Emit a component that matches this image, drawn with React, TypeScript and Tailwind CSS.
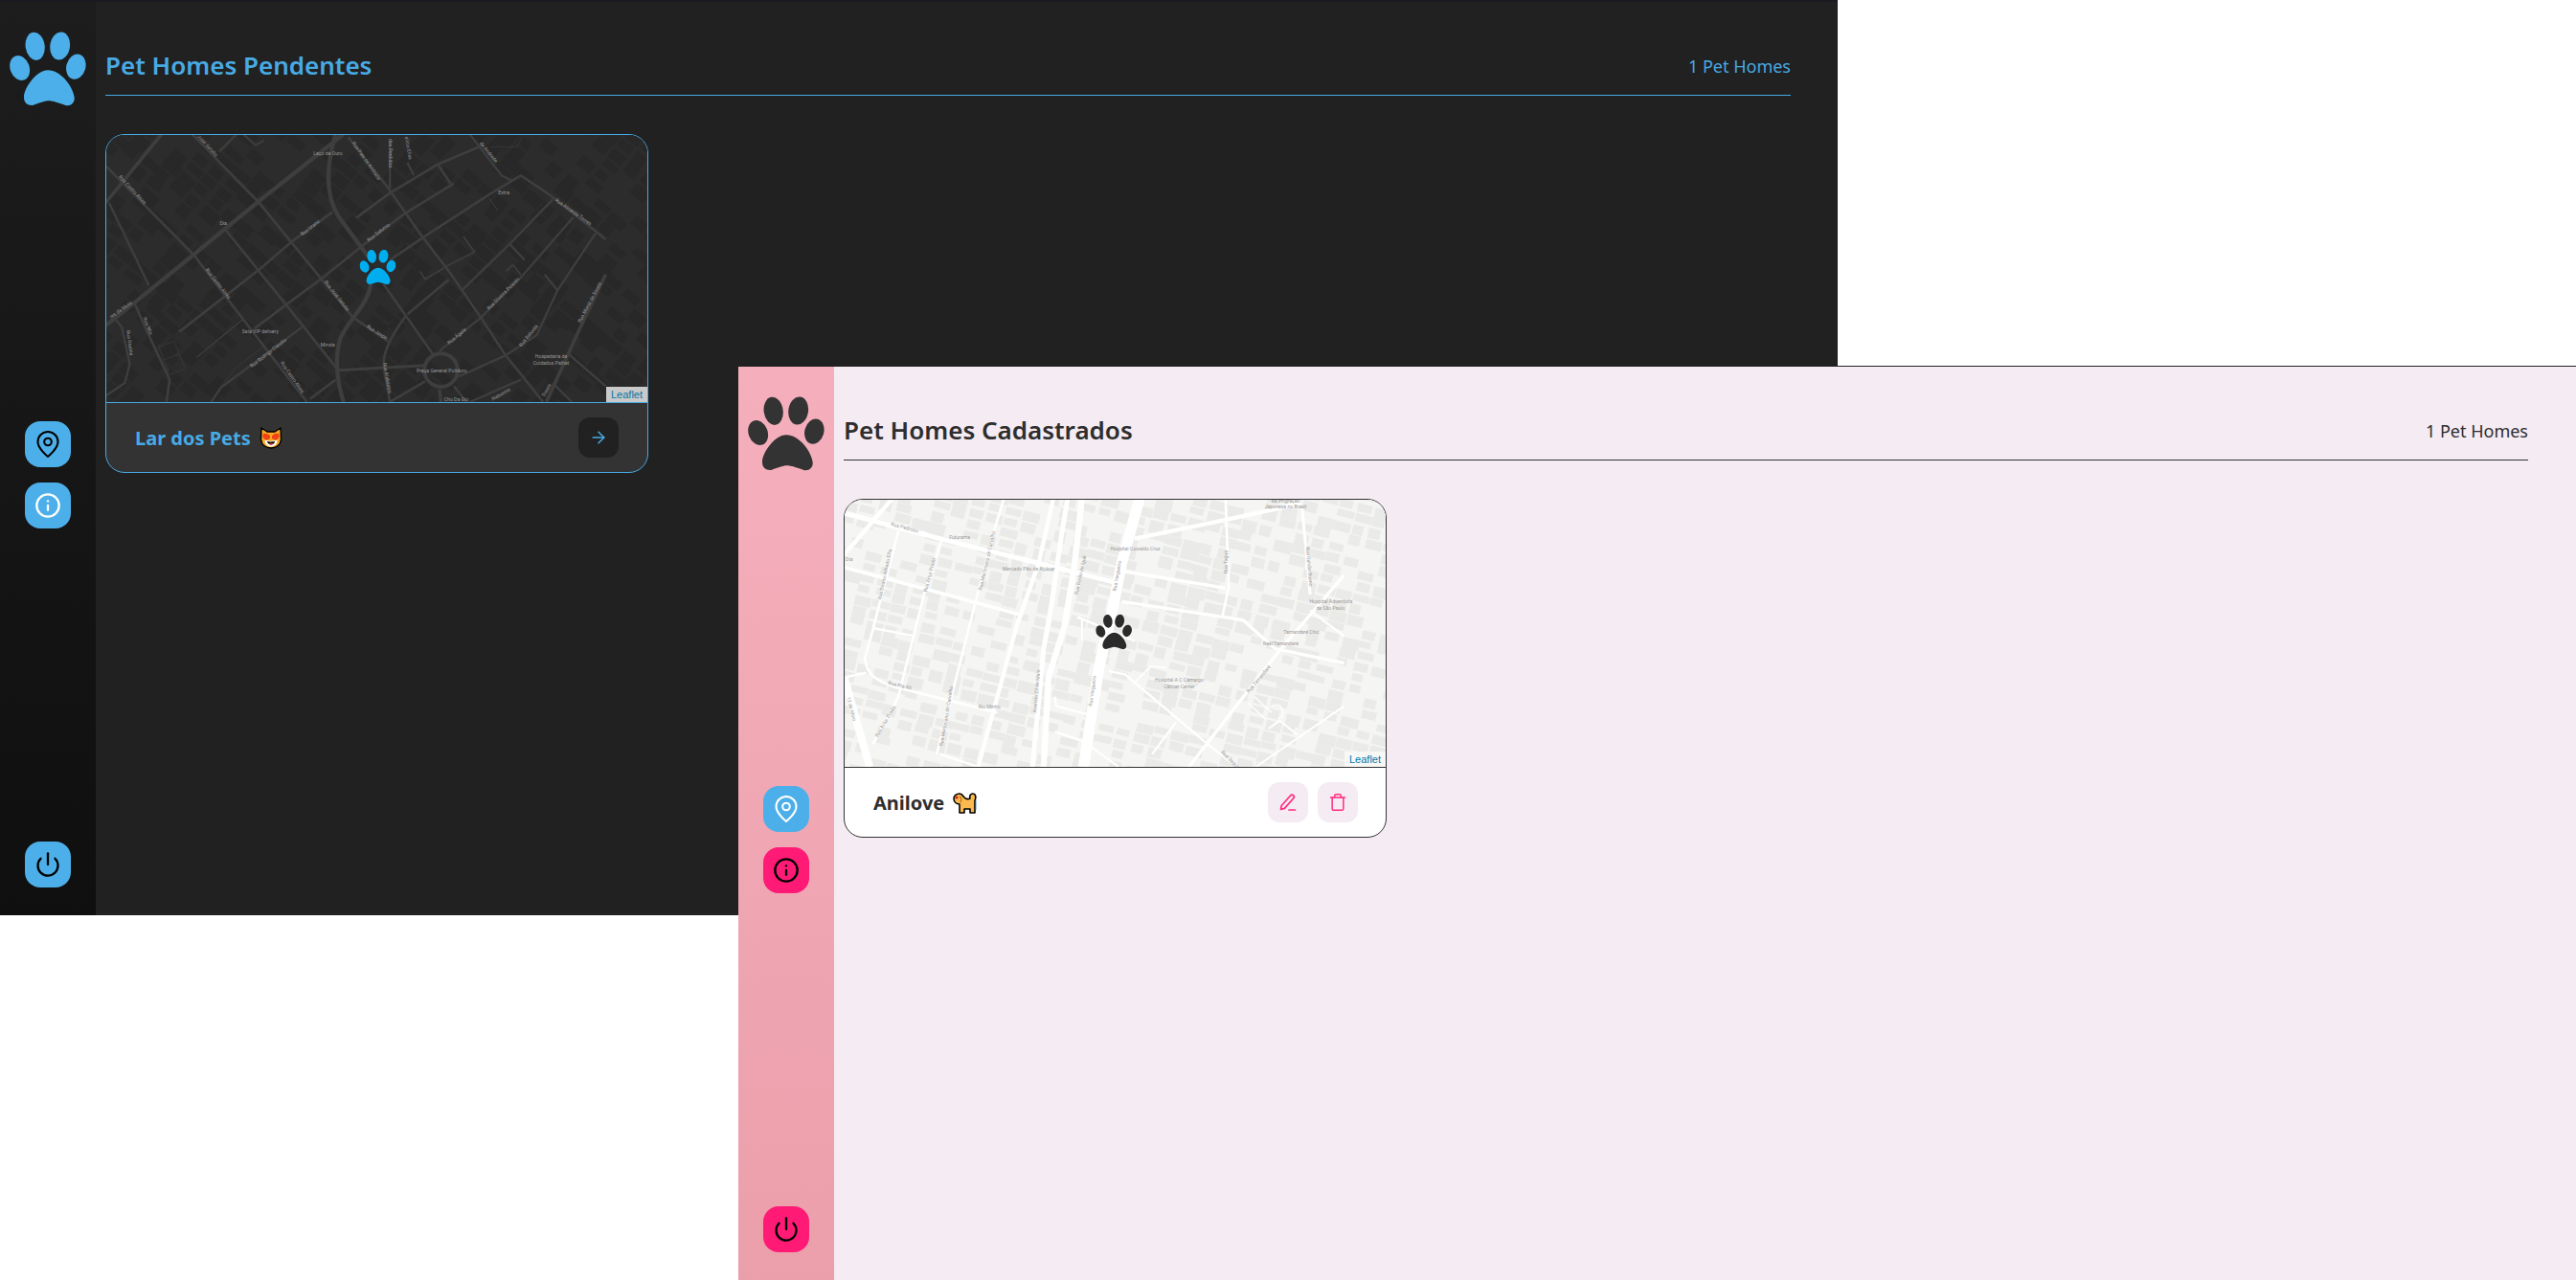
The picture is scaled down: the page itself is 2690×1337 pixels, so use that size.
import { ArrowRight, Info, Power, Trash } from "lucide-react";

type Road = [string, number];
type Label = [string, number, number, number];

const font = { fontFamily: "'Noto Sans', Lato, sans-serif" };

function PawShape() {
  return (
    <>
      <ellipse cx="110" cy="85" rx="30" ry="44" transform="rotate(-8 110 85)" />
      <ellipse cx="188" cy="84" rx="31" ry="44" transform="rotate(8 188 84)" />
      <ellipse cx="62" cy="153" rx="30" ry="40" transform="rotate(-20 62 153)" />
      <ellipse cx="238" cy="149" rx="30" ry="40" transform="rotate(15 238 149)" />
      <path d="M150 160 C115 160 75 215 75 245 C75 265 90 272 105 269 C125 263 140 256 152 256 C165 256 185 263 205 270 C222 274 235 262 233 245 C228 210 190 160 150 160 Z" />
    </>
  );
}

function Blocks({ seed, angle, color, step, fill }: { seed: number; angle: number; color: string; step: number; fill: number }) {
  const items: [number, number, number, number][] = [];
  let s = seed;
  const r = () => {
    s = (s * 16807) % 2147483647;
    return s / 2147483647;
  };
  for (let x = -700; x < 2400; x += step) {
    for (let y = -700; y < 1600; y += step * 0.62) {
      if (r() < fill) items.push([x + r() * 6, y + r() * 4, step * (0.6 + r() * 0.42), step * (0.36 + r() * 0.3)]);
    }
  }
  return (
    <g transform={`rotate(${angle} 780 420)`} fill={color}>
      {items.map(([x, y, w, h], i) => (
        <rect key={i} x={x} y={y} width={w} height={h} />
      ))}
    </g>
  );
}

const darkRoads: Road[] = [
  ["M745 0 L480 210 L275 378 L100 520 L0 600", 13],
  ["M175 0 L0 215", 11],
  ["M720 0 C690 100 685 190 730 260 L830 395", 13],
  ["M830 470 C820 540 760 580 735 640 C715 700 725 780 745 840", 13],
  ["M270 0 L480 215 L680 460 L775 575 L885 650", 8],
  ["M0 100 L275 378 L430 580 L630 840", 8],
  ["M10 215 L135 475", 7],
  ["M90 530 L130 620 L200 770 L190 840", 8],
  ["M375 300 L565 535 L720 730", 8],
  ["M230 620 L480 425 L585 335 L710 245", 8],
  ["M465 610 L565 535 L680 450 L810 345 L935 250 L1090 155", 8],
  ["M785 262 L890 185 L1040 95 L1170 40", 8],
  ["M1040 95 L1080 155", 8],
  ["M890 170 L890 20", 7],
  ["M965 130 L945 90", 7],
  ["M760 10 L885 170 L990 320 L1075 430 L1175 575 L1250 690 L1370 840", 8],
  ["M890 395 L1000 320 L1200 190 L1300 130 L1390 190 L1535 305 L1566 330", 8],
  ["M870 470 L940 570 L1025 690", 8],
  ["M1115 490 L1265 345 L1400 205", 7],
  ["M945 565 L1075 455", 8],
  ["M940 570 C880 650 870 690 870 730 L890 840", 8],
  ["M730 740 L1000 725", 9],
  ["M1105 760 L1250 695 L1350 630 L1415 490 L1535 310", 7],
  ["M1045 680 L1175 575 L1300 450 L1465 260", 7],
  ["M1380 840 L1480 620 L1566 440", 11],
  ["M1450 690 L1566 790", 7],
  ["M1265 345 L1312 395", 7],
  ["M1375 440 L1415 490", 7],
  ["M330 840 L360 795 L615 605", 7],
  ["M640 830 L720 770", 8],
  ["M890 840 L1000 775", 8],
  ["M1045 800 L1050 840", 10],
  ["M1090 790 L1130 840", 7],
  ["M1140 840 L1300 770", 7],
  ["M1400 780 L1460 840", 7],
  ["M0 820 L60 780 L75 720 L50 605 L30 580", 7],
  ["M985 430 L1000 455 L1075 410 L1155 370 L1120 320", 5],
  ["M1255 430 L1275 410 L1300 440", 5],
  ["M1200 200 L1228 240", 3],
  ["M355 55 L410 0", 7],
  ["M430 0 L470 35 L495 20", 6],
  ["M285 700 L430 580", 4],
  ["M360 790 L410 730 L490 670", 2],
  ["M1205 40 L1290 40 L1305 5", 2],
  ["M1140 0 L1240 130 L1270 145", 7],
  ["M165 665 L215 650 L248 735 L200 755 Z M180 708 L230 690", 2],
];

const darkLabels: Label[] = [
  ["Laço de Ouro", 696, 66, 0],
  ["José Getulio", 315, 40, 47],
  ["Rua Castro Alves", 80, 178, 47],
  ["Dia", 368, 284, 0],
  ["Rua Urano", 643, 298, -38],
  ["Rua Saturno", 857, 312, -38],
  ["Rua Pais de Andrade", 812, 87, 55],
  ["dos Perdidos", 887, 60, 90],
  ["elício Elias", 943, 45, 80],
  ["de Andrade", 1195, 60, 50],
  ["Extra", 1247, 188, 0],
  ["Rua Almeida Torres", 1462, 248, 35],
  ["Rua Castro Alves", 348, 472, 52],
  ["Rua José Getulio", 720, 510, 52],
  ["Rua Oliveira Peixoto", 1248, 504, -45],
  ["Rua Ágata", 1103, 637, -40],
  ["Rua Baturité", 1328, 635, -50],
  ["Rua Muniz de Souza", 1520, 530, -62],
  ["res da Mota", 50, 555, -35],
  ["Rua Nilo", 127, 603, 68],
  ["Rua Graúna", 70, 655, 82],
  ["Saía VIP delivery", 484, 624, 0],
  ["Rua Rodrigo Cláudio", 512, 690, -38],
  ["Rua Castro Alves", 580, 765, 55],
  ["Rua Jaspe", 847, 625, 32],
  ["Mirota", 695, 665, 0],
  ["Rua Alabastro", 877, 765, 80],
  ["Praça General Polidoro", 1052, 746, 0],
  ["Hospedaria de", 1395, 703, 0],
  ["Cuidados Palhat", 1395, 724, 0],
  ["Alabastro", 1240, 820, -30],
  ["Cho Da Gio", 1098, 836, 0],
  ["Souza", 1385, 805, -60],
];

const lightRoads: Road[] = [
  ["M925 0 L870 200 L840 350 L800 520 L750 840", 34],
  ["M655 0 L610 200 L540 400 L420 840", 13],
  ["M700 0 L680 120 L650 330 L625 470 L590 840", 15],
  ["M745 0 L720 220 L690 400 L640 560 L625 840", 19],
  ["M0 45 L300 125 L600 200 L850 262", 15],
  ["M880 228 L1195 280", 10],
  ["M0 215 L300 295 L560 365", 11],
  ["M870 322 L1250 380 L1350 470 L1566 515", 10],
  ["M910 125 L1200 65 L1430 15", 13],
  ["M1195 0 L1205 275 L1185 370", 8],
  ["M1435 30 L1460 300", 9],
  ["M150 0 L0 175", 13],
  ["M305 130 L250 300 L170 620 L90 770", 8],
  ["M500 0 L470 100 L410 330 L290 800", 8],
  ["M170 100 L90 410 L65 500 C70 550 100 570 160 590 L480 670", 8],
  ["M0 560 L70 545", 7],
  ["M90 405 L220 430", 7],
  ["M0 560 L80 840", 24],
  ["M1080 840 L1360 480 L1566 240", 10],
  ["M830 540 L880 550 L1140 770 L1230 840", 7],
  ["M910 575 L960 525 L1010 530", 5],
  ["M1040 700 L965 800", 7],
  ["M730 370 L910 445", 7],
  ["M745 375 L745 445", 6],
  ["M660 620 L665 650 L760 675", 7],
  ["M660 730 L750 760 L860 840", 7],
  ["M1460 350 L1566 430", 7],
  ["M1265 640 L1320 690 M1285 620 L1340 670 M1340 650 C1370 630 1390 680 1360 690", 4],
  ["M1330 720 L1365 695 L1420 740", 6],
  ["M1290 840 L1566 650", 6],
  ["M300 800 L420 840", 7],
];

const lightLabels: Label[] = [
  ["Rua Pedroso", 188, 95, 15],
  ["Futurama", 362, 125, 0],
  ["Rua Doutor Alfredo Ellis", 133, 238, -78],
  ["Rua Artur Prado", 273, 240, -75],
  ["Rua Martiniano de Carvalho", 452, 195, -77],
  ["Mercado Pão de Açúcar", 578, 224, 0],
  ["Rua Barão de Iguá", 745, 240, -78],
  ["Hospital Oswaldo Cruz", 912, 163, 0],
  ["Rua Vergueiro", 860, 243, -80],
  ["Rua Taguá", 1202, 198, -90],
  ["Rua Galvão Bueno", 1452, 213, 85],
  ["da Imigração", 1383, 12, 0],
  ["Japonesa no Brasil", 1383, 31, 0],
  ["Dia", 16, 195, 0],
  ["Hospital Adventista", 1525, 327, 0],
  ["de São Paulo", 1524, 349, 0],
  ["Tamandaré Chic", 1432, 423, 0],
  ["Real Tamandaré", 1368, 460, 0],
  ["Rua Tamandaré", 1302, 568, -50],
  ["Hospital A C Camargo", 1050, 572, 0],
  ["Câncer Center", 1050, 593, 0],
  ["Avenida 23 de Maio", 608, 603, -85],
  ["Rua Vergueiro", 783, 603, -82],
  ["Rua Pio XII", 173, 590, 13],
  ["Rio Minho", 455, 657, 0],
  ["Rua Artur Prado", 133, 700, -60],
  ["Rua Martiniano de Carvalho", 325, 682, -80],
  ["12 de Maio", 18, 660, 75],
  ["Rua Jaguaribe", 1215, 830, 45],
];

function MapArt({
  bg,
  block,
  road,
  roads,
  labels,
  labelColor,
  angle,
  paw,
  pawX,
  circle,
  seed,
  step,
  fill,
}: {
  bg: string;
  block: string;
  road: string;
  roads: Road[];
  labels: Label[];
  labelColor: string;
  angle: number;
  paw: string;
  pawX: number;
  circle: boolean;
  seed: number;
  step: number;
  fill: number;
}) {
  return (
    <svg viewBox="3 3 1692 837" className="block w-full h-full" style={{ backgroundColor: bg }}>
      <Blocks seed={seed} angle={angle} color={block} step={step} fill={fill} />
      <g fill="none" stroke={road} strokeLinejoin="round">
        {roads.map(([d, w], i) => (
          <path key={i} d={d} strokeWidth={w} />
        ))}
        {circle && <circle cx="1050" cy="740" r="52" strokeWidth="12" />}
      </g>
      <g fill={labelColor} fontSize="15.5" fontFamily="Roboto, sans-serif" textAnchor="middle">
        {labels.map(([t, x, y, r], i) => (
          <text key={i} x={x} y={y} transform={`rotate(${r} ${x} ${y})`}>
            {t}
          </text>
        ))}
      </g>
      <svg x={pawX} y="362" width="114" height="110" viewBox="30 40 240 232" fill={paw}>
        <PawShape />
      </svg>
    </svg>
  );
}

function CatEmoji() {
  return (
    <svg width="24" height="23" viewBox="0 0 24 23" className="block">
      <path d="M2 1 L8 5 H16 L22 1 L22.5 13 C22 19 17 22 12 22 C7 22 2 19 1.5 13 Z" fill="#f7a81e" stroke="#000" strokeWidth="1.4" strokeLinejoin="round" />
      <path d="M3.5 7.5 C6 6 9 7 11 9.5 L11 12 L7 14 L3.5 11 Z M20.5 7.5 C18 6 15 7 13 9.5 L13 12 L17 14 L20.5 11 Z" fill="#f2401a" />
      <path d="M5.5 13.5 C9 15 15 15 18.5 13.5 C18.5 18 15.5 20.5 12 20.5 C8.5 20.5 5.5 18 5.5 13.5 Z" fill="#fff" />
      <path d="M8 15 C10 15.6 14 15.6 16 15 C16 17 14 18.5 12 18.5 C10 18.5 8 17 8 15 Z" fill="#111" />
      <path d="M10 17 H14 C14 18 13 18.5 12 18.5 C11 18.5 10 18 10 17 Z" fill="#e0281e" />
    </svg>
  );
}

function DogEmoji() {
  return (
    <svg width="25" height="22" viewBox="0 0 25 22" className="block">
      <path
        d="M1 6 C1 3 4 1 7 1 C10 1 11 4 12 5 C14 7 16 7 18 6 C17 3 19 0.8 21 1 C24 1.2 24.5 5 23 8 C23 12 23 17 23 21 H18 V17 H12 V21 H7 V12 C4 12 1 10 1 6 Z"
        fill="#fbb94f"
        stroke="#000"
        strokeWidth="1.6"
        strokeLinejoin="round"
      />
      <circle cx="4" cy="5" r="1.6" fill="#c8281e" />
      <path d="M7 4 C9 5 9 8 8 10" fill="none" stroke="#b8701a" strokeWidth="1.4" />
      <path d="M24 8 V18" stroke="#1f6fd0" strokeWidth="0.8" />
    </svg>
  );
}

function SideButton({ bg, color, children }: { bg: string; color: string; children: React.ReactNode }) {
  return (
    <div className={`flex h-12 w-12 items-center justify-center rounded-2xl ${bg} ${color}`}>{children}</div>
  );
}

function PinIcon() {
  return (
    <svg width="24" height="28" viewBox="0 0 24 28" fill="none" stroke="currentColor" strokeWidth="2.1" strokeLinejoin="round">
      <path d="M12 27 C12 27 1.5 18.5 1.5 11.5 A10.5 10.5 0 0 1 22.5 11.5 C22.5 18.5 12 27 12 27 Z" />
      <circle cx="12" cy="11.5" r="3.8" />
    </svg>
  );
}

function PenIcon() {
  return (
    <svg width="20" height="20" viewBox="0 0 20 20" fill="none" stroke="currentColor" strokeWidth="1.7" strokeLinecap="round" strokeLinejoin="round">
      <path d="M2.5 17.5 L3.2 13.5 L12.6 3 A2.1 2.1 0 0 1 15.8 5.8 L6.4 16.4 Z" />
      <path d="M11 18 H17.5" />
    </svg>
  );
}

export default function App() {
  return (
    <div className="relative h-[1337px] w-[2690px] overflow-hidden bg-white" style={font}>
      {/* Dark window */}
      <div className="absolute left-0 top-0 flex h-[956px] w-[1919px] border-t-2 border-[#1a1a20] bg-[#212121] text-[#48aae4]">
        <aside className="flex w-[100px] shrink-0 flex-col items-center bg-gradient-to-b from-[#1d1d1d] to-[#0f0f0f]">
          <svg width="80" height="78" viewBox="30 40 240 232" fill="#4dafe9" className="mt-[31px] shrink-0">
            <PawShape />
          </svg>
          <nav className="mt-[329px] flex flex-col gap-4">
            <SideButton bg="bg-[#4dafe9]" color="text-black">
              <PinIcon />
            </SideButton>
            <SideButton bg="bg-[#4dafe9]" color="text-white">
              <Info size={28} strokeWidth={2} />
            </SideButton>
          </nav>
          <div className="mb-[29px] mt-auto">
            <SideButton bg="bg-[#4dafe9]" color="text-black">
              <Power size={28} strokeWidth={2} />
            </SideButton>
          </div>
        </aside>
        <main className="flex-1 pl-[10px] pr-[49px]">
          <header className="flex h-[98px] items-center justify-between border-b border-[#48aae4] pt-[36px]">
            <h1 className="text-[26px] font-semibold">Pet Homes Pendentes</h1>
            <span className="mt-[2px] text-[18px]">1 Pet Homes</span>
          </header>
          <article className="mt-10 w-[567px] overflow-hidden rounded-[20px] border border-[#48aae4] bg-[#333333]">
            <div className="relative h-[279px]">
              <MapArt
                bg="#2c2c2c"
                block="#282828"
                road="#3e3e3e"
                roads={darkRoads}
                labels={darkLabels}
                labelColor="#999999"
                angle={40}
                paw="#00aeef"
                pawX={795}
                circle
                seed={1234}
                step={62}
                fill={0.6}
              />
              <span className="absolute bottom-0 right-0 h-4 bg-[#c9c9c9] px-[5px] text-[11px] leading-4 text-[#0078a8]" style={{ fontFamily: "'Liberation Sans', sans-serif" }}>
                Leaflet
              </span>
            </div>
            <div className="flex h-[73px] items-center justify-between border-t border-[#48aae4] pl-[30px] pr-[30px]">
              <div className="mt-[1px] flex items-center gap-[9px]">
                <span className="text-[20px] font-bold">Lar dos Pets</span>
                <CatEmoji />
              </div>
              <button className="flex h-[42px] w-[42px] items-center justify-center rounded-xl bg-[#212121] text-[#48aae4]">
                <ArrowRight size={20} strokeWidth={1.8} />
              </button>
            </div>
          </article>
        </main>
      </div>

      {/* Light window */}
      <div className="absolute bottom-0 left-[771px] right-0 top-[382px] flex border-t border-[#222222] bg-[#f5ebf3] text-[#2e2e2e]">
        <aside className="flex w-[100px] shrink-0 flex-col items-center bg-gradient-to-b from-[#f5afbc] to-[#eb9fab]">
          <svg width="80" height="78" viewBox="30 40 240 232" fill="#333333" className="mt-[31px] shrink-0">
            <PawShape />
          </svg>
          <nav className="mt-[329px] flex flex-col gap-4">
            <SideButton bg="bg-[#4dafe9]" color="text-white">
              <PinIcon />
            </SideButton>
            <SideButton bg="bg-[#ff1a75]" color="text-black">
              <Info size={28} strokeWidth={2} />
            </SideButton>
          </nav>
          <div className="mb-[29px] mt-auto">
            <SideButton bg="bg-[#ff1a75]" color="text-black">
              <Power size={28} strokeWidth={2} />
            </SideButton>
          </div>
        </aside>
        <main className="flex-1 pl-[10px] pr-[50px]">
          <header className="flex h-[98px] items-center justify-between border-b border-[#333333] pt-[36px]">
            <h1 className="text-[26px] font-semibold">Pet Homes Cadastrados</h1>
            <span className="mt-[2px] text-[18px]">1 Pet Homes</span>
          </header>
          <article className="mt-10 w-[567px] overflow-hidden rounded-[20px] border border-[#333333] bg-white">
            <div className="relative h-[279px]">
              <MapArt
                bg="#f5f5f3"
                block="#eaeae8"
                road="#ffffff"
                roads={lightRoads}
                labels={lightLabels}
                labelColor="#9a9a9a"
                angle={14}
                paw="#2b2b2b"
                pawX={788}
                circle={false}
                seed={987}
                step={56}
                fill={0.72}
              />
              <span className="absolute bottom-0 right-0 h-4 bg-[#f7f7f6] px-[5px] text-[11px] leading-4 text-[#0078a8]" style={{ fontFamily: "'Liberation Sans', sans-serif" }}>
                Leaflet
              </span>
            </div>
            <div className="flex h-[73px] items-center justify-between border-t border-[#333333] pl-[30px] pr-[29px]">
              <div className="mt-[1px] flex items-center gap-[9px]">
                <span className="text-[20px] font-bold">Anilove</span>
                <DogEmoji />
              </div>
              <div className="flex gap-[10px] text-[#ff2d80]">
                <button className="flex h-[42px] w-[42px] items-center justify-center rounded-xl bg-[#f5ebf3]">
                  <PenIcon />
                </button>
                <button className="flex h-[42px] w-[42px] items-center justify-center rounded-xl bg-[#f5ebf3]">
                  <Trash size={20} strokeWidth={1.8} />
                </button>
              </div>
            </div>
          </article>
        </main>
      </div>
    </div>
  );
}
